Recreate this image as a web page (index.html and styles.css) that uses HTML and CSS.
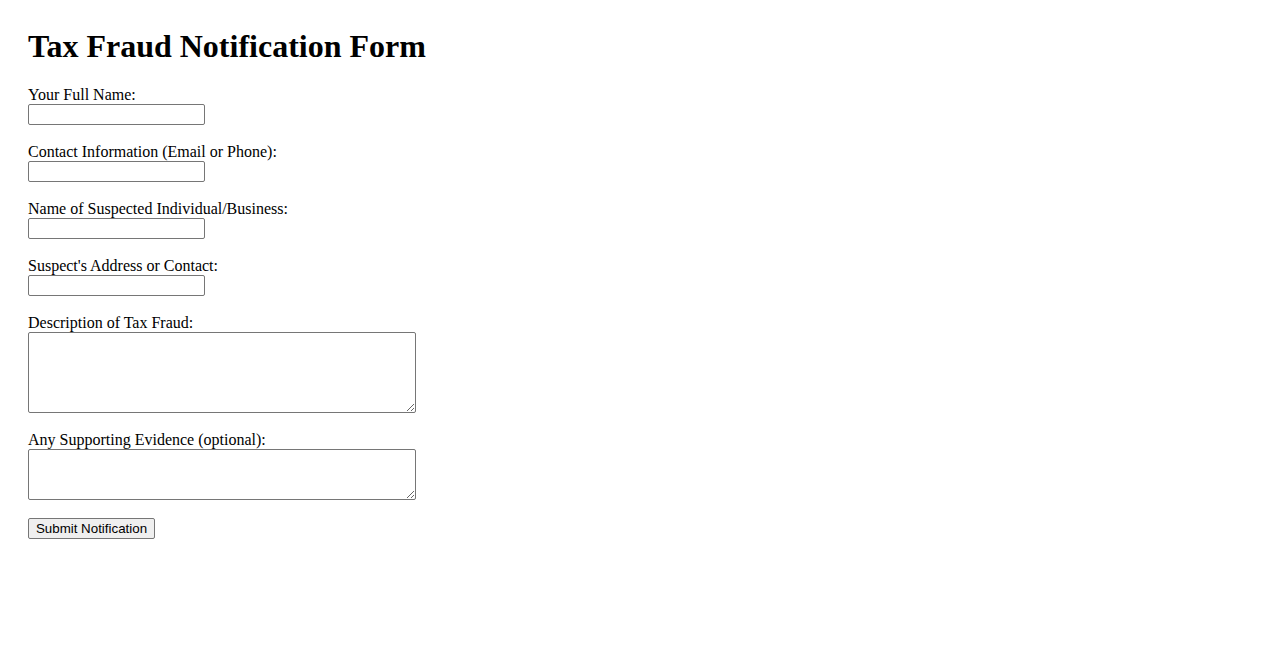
FILE: index.html
```html
<!DOCTYPE html>
<html>
<head>
<meta charset="utf-8">
<title>Tax Fraud Notification Form</title>
<link rel="stylesheet" href="styles.css">
</head>
<body>
<div class="page">
<h1 class="title">Tax Fraud Notification Form</h1>
<form class="form">
<label class="lbl" for="name">Your Full Name:</label><br>
<input class="field" type="text" id="name"><br><br>
<label class="lbl" for="contact">Contact Information (Email or Phone):</label><br>
<input class="field" type="text" id="contact"><br><br>
<label class="lbl" for="suspect">Name of Suspected Individual/Business:</label><br>
<input class="field" type="text" id="suspect"><br><br>
<label class="lbl" for="address">Suspect's Address or Contact:</label><br>
<input class="field" type="text" id="address"><br><br>
<label class="lbl" for="desc">Description of Tax Fraud:</label><br>
<textarea class="area area-lg" id="desc"></textarea><br><br>
<label class="lbl" for="evidence">Any Supporting Evidence (optional):</label><br>
<textarea class="area area-sm" id="evidence"></textarea><br><br>
<button class="submit" type="submit">Submit Notification</button>
</form>
</div>
</body>
</html>
```
FILE: styles.css
```css
html, body {
  margin: 0;
  padding: 0;
  background: #fff;
}
body {
  font-family: "Liberation Serif", "Times New Roman", serif;
  font-size: 16px;
  color: #000;
}
.page {
  padding: 28px;
}
.title {
  font-size: 32px;
  font-weight: bold;
  margin: 0 0 21px 0;
}
.form {
  margin: 0;
}
.field {
  box-sizing: border-box;
  width: 177px;
  height: 21px;
  margin: 0;
  padding: 1px 2px;
  border: 1px solid #767676;
  border-radius: 2px;
  font-family: "Liberation Sans", Arial, sans-serif;
  font-size: 13.33px;
}
.area {
  box-sizing: border-box;
  width: 388px;
  margin: 0;
  padding: 2px;
  border: 1px solid #767676;
  border-radius: 2px;
  font-family: "Liberation Mono", monospace;
  font-size: 13.33px;
  vertical-align: bottom;
}
.area-lg {
  height: 81px;
}
.area-sm {
  height: 51px;
}
.submit {
  box-sizing: border-box;
  height: 21px;
  width: 127px;
  padding: 1px 6px;
  margin: 0;
  border: 1px solid #767676;
  border-radius: 2px;
  background: #efefef;
  font-family: "Liberation Sans", Arial, sans-serif;
  font-size: 13.33px;
  color: #000;
}
```
